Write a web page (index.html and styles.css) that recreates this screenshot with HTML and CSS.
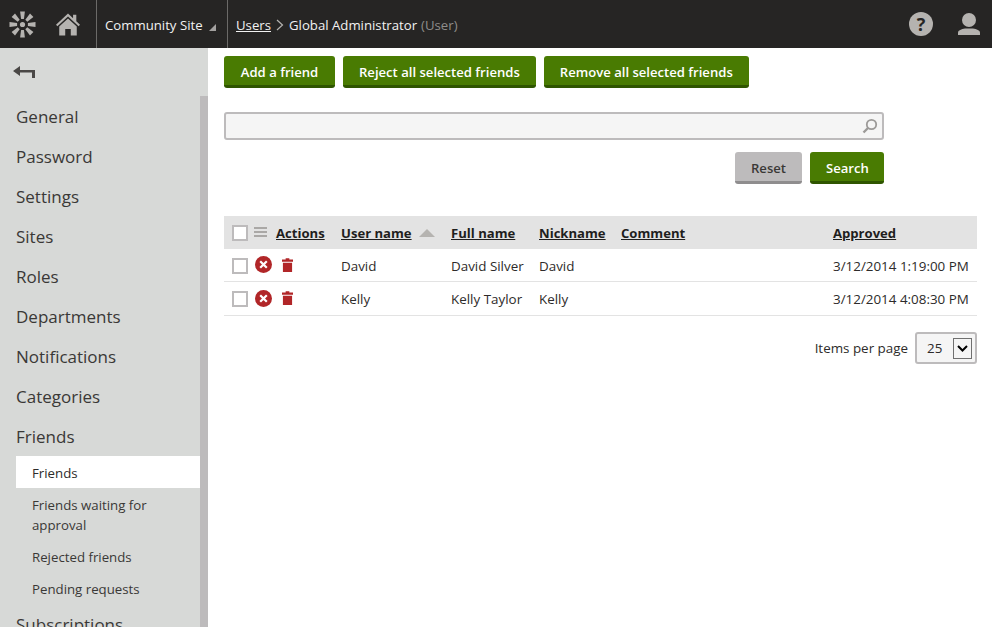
FILE: index.html
```html
<!DOCTYPE html>
<html lang="en">
<head>
  <meta charset="UTF-8" />
  <title>Friends - Global Administrator</title>
  <link rel="stylesheet" href="styles.css">
</head>
<body>
  <header class="topbar">
    <div class="topbar-icons">
      <svg class="logo" width="29" height="29" viewBox="0 0 28 29">
        <g fill="#b5b3b0">
          <circle cx="14" cy="14.5" r="2.6"/>
          <path d="M11.600 1.500h4.800l-1 7.600h-2.800z"/>
          <path d="M11.600 1.500h4.800l-1 7.600h-2.800z" transform="rotate(45 14 14.5)"/>
          <path d="M11.600 1.500h4.800l-1 7.600h-2.800z" transform="rotate(90 14 14.5)"/>
          <path d="M11.600 1.500h4.800l-1 7.600h-2.800z" transform="rotate(135 14 14.5)"/>
          <path d="M11.600 1.500h4.800l-1 7.600h-2.800z" transform="rotate(180 14 14.5)"/>
          <path d="M11.600 1.500h4.800l-1 7.600h-2.800z" transform="rotate(225 14 14.5)"/>
          <path d="M11.600 1.500h4.800l-1 7.600h-2.800z" transform="rotate(270 14 14.5)"/>
          <path d="M11.600 1.500h4.800l-1 7.600h-2.800z" transform="rotate(315 14 14.5)"/>
        </g>
      </svg>
      <svg class="home" width="24" height="23" viewBox="0 0 26 24">
        <path fill="#b5b3b0" d="M13 0 0 12.400l1.500 1.600L13 3.200 24.500 14l1.500-1.600-4-3.800V1.500h-3.500v3.800z"/>
        <path fill="#b5b3b0" d="M13 5.400 3.500 14.300V24H10v-7h6v7h6.500v-9.700z"/>
      </svg>
    </div>
    <div class="site-picker">Community Site <span class="caret"></span></div>
    <nav class="crumbs">
      <a href="#">Users</a>
      <svg class="crumb-sep" width="8" height="12" viewBox="0 0 8 12"><path d="M1 1l5.500 5L1 11" fill="none" stroke="#b5b3b0" stroke-width="1.200"/></svg>
      <span>Global Administrator</span>
      <span class="muted">(User)</span>
    </nav>
    <div class="topbar-right">
      <svg width="24" height="24" viewBox="0 0 24 24">
        <circle cx="12" cy="12" r="12" fill="#b5b3b0"/>
        <text x="12" y="18.500" text-anchor="middle" class="help-mark">?</text>
      </svg>
      <svg width="22" height="22" viewBox="0 0 22 22">
        <circle cx="11" cy="7" r="7" fill="#b5b3b0"/>
        <path fill="#b5b3b0" d="M0 22v-2.500c0-2 3.500-3.500 7-4h8c3.500.5 7 2 7 4V22z"/>
      </svg>
    </div>
  </header>

  <div class="layout">
    <aside class="sidebar">
      <div class="sidebar-scroll">
        <div class="back">
          <svg width="22" height="13" viewBox="0 0 22 13">
            <path fill="#4a4846" d="M7 0 0 5 7 10V6.500h12V12h3V4H7z"/>
          </svg>
        </div>
        <ul class="menu">
          <li>General</li>
          <li>Password</li>
          <li>Settings</li>
          <li>Sites</li>
          <li>Roles</li>
          <li>Departments</li>
          <li>Notifications</li>
          <li>Categories</li>
          <li>Friends</li>
        </ul>
        <ul class="submenu">
          <li class="active">Friends</li>
          <li>Friends waiting for approval</li>
          <li>Rejected friends</li>
          <li>Pending requests</li>
        </ul>
        <ul class="menu">
          <li>Subscriptions</li>
        </ul>
      </div>
      <div class="scrollbar"></div>
    </aside>

    <main class="content">
      <div class="actions">
        <button class="btn btn-add">Add a friend</button>
        <button class="btn">Reject all selected friends</button>
        <button class="btn">Remove all selected friends</button>
      </div>

      <div class="filter">
        <div class="search-box">
          <svg width="16" height="16" viewBox="0 0 16 16">
            <circle cx="9.500" cy="6.500" r="4.700" fill="none" stroke="#9c9a98" stroke-width="1.800"/>
            <path d="M6 10 1.500 14.500" stroke="#9c9a98" stroke-width="2.400"/>
          </svg>
        </div>
        <div class="filter-buttons">
          <button class="btn btn-grey">Reset</button>
          <button class="btn btn-search">Search</button>
        </div>
      </div>

      <table class="grid">
        <colgroup>
          <col class="col-actions"><col class="col-user"><col class="col-full">
          <col class="col-nick"><col class="col-comment"><col class="col-approved">
        </colgroup>
        <thead>
          <tr>
            <th>
              <div class="cell-tools">
                <span class="check"></span>
                <svg class="lines" width="13" height="10" viewBox="0 0 13 10"><path d="M0 1h13M0 5h13M0 9h13" stroke="#aaa8a6" stroke-width="2"/></svg>
                <a href="#">Actions</a>
              </div>
            </th>
            <th><a href="#">User name</a><span class="sort"></span></th>
            <th><a href="#">Full name</a></th>
            <th><a href="#">Nickname</a></th>
            <th><a href="#">Comment</a></th>
            <th><a href="#">Approved</a></th>
          </tr>
        </thead>
        <tbody>
          <tr>
            <td>
              <div class="cell-tools">
                <span class="check"></span>
                <svg class="reject" width="17" height="17" viewBox="0 0 17 17"><circle cx="8.500" cy="8.500" r="8.500" fill="#b12628"/><path d="M5.200 5.200l6.600 6.600M11.800 5.200l-6.600 6.600" stroke="#fff" stroke-width="2.200"/></svg>
                <svg class="trash" width="11" height="14" viewBox="0 0 12 15"><path fill="#b12628" d="M4 0h4v1.500h4V4H0V1.500h4zM1 5h10v10H1z"/></svg>
              </div>
            </td>
            <td>David</td>
            <td>David Silver</td>
            <td>David</td>
            <td></td>
            <td>3/12/2014 1:19:00 PM</td>
          </tr>
          <tr>
            <td>
              <div class="cell-tools">
                <span class="check"></span>
                <svg class="reject" width="17" height="17" viewBox="0 0 17 17"><circle cx="8.500" cy="8.500" r="8.500" fill="#b12628"/><path d="M5.200 5.200l6.600 6.600M11.800 5.200l-6.600 6.600" stroke="#fff" stroke-width="2.200"/></svg>
                <svg class="trash" width="11" height="14" viewBox="0 0 12 15"><path fill="#b12628" d="M4 0h4v1.500h4V4H0V1.500h4zM1 5h10v10H1z"/></svg>
              </div>
            </td>
            <td>Kelly</td>
            <td>Kelly Taylor</td>
            <td>Kelly</td>
            <td></td>
            <td>3/12/2014 4:08:30 PM</td>
          </tr>
        </tbody>
      </table>

      <div class="pager">
        <span>Items per page</span>
        <div class="page-size">
          <span>25</span>
          <span class="arrow-box">
            <svg width="11" height="7" viewBox="0 0 11 7"><path d="M1 1l4.500 4.500L10 1" fill="none" stroke="#000" stroke-width="2"/></svg>
          </span>
        </div>
      </div>
    </main>
  </div>
</body>
</html>
```

FILE: styles.css
```css
html, body {
  margin: 0;
  padding: 0;
  width: 100%;
  height: 100%;
  overflow: hidden;
  background: #fff;
  color: #2d2b2a;
  font-family: "Open Sans", "Noto Sans", sans-serif;
  font-size: 13.4px;
}
a {
  color: inherit;
}
ul {
  list-style: none;
  margin: 0;
  padding: 0;
}

/* top bar */
.topbar {
  height: 48px;
  display: flex;
  align-items: stretch;
  background: #262524;
  color: #f2f2f2;
  font-size: 13.2px;
}
.topbar-icons {
  width: 96px;
  display: flex;
  align-items: center;
  gap: 19px;
  padding-left: 8px;
  box-sizing: border-box;
}
.site-picker {
  width: 132px;
  box-sizing: border-box;
  padding: 2px 0 0 8px;
  border-left: 1px solid #6b6a68;
  border-right: 1px solid #6b6a68;
  display: flex;
  align-items: center;
  gap: 6px;
  white-space: nowrap;
}
.caret {
  width: 0;
  height: 0;
  margin-top: 5px;
  border-left: 7px solid transparent;
  border-bottom: 7px solid #a3a19f;
}
.crumbs {
  display: flex;
  align-items: center;
  gap: 5px;
  padding: 2px 0 0 8px;
  white-space: nowrap;
}
.crumb-sep {
  margin: 0;
}
.muted {
  margin-left: -1px;
  color: #8f8d8b;
}
.topbar-right {
  margin-left: auto;
  display: flex;
  align-items: center;
  gap: 25px;
  padding-right: 12px;
}
.help-mark {
  fill: #262524;
  font-family: "Open Sans", sans-serif;
  font-size: 18px;
  font-weight: 700;
}

/* left menu */
.layout {
  display: flex;
  height: 579px;
}
.sidebar {
  width: 208px;
  flex: none;
  display: flex;
  background: #d7d9d7;
  overflow: hidden;
}
.sidebar-scroll {
  width: 200px;
  flex: none;
}
.scrollbar {
  width: 8px;
  margin-top: 48px;
  background: #bdbbbc;
}
.back {
  height: 48px;
  padding: 17px 0 0 13px;
  box-sizing: border-box;
}
.menu li {
  height: 40px;
  line-height: 41px;
  padding-left: 16px;
  font-size: 17px;
  color: #3a3836;
}
.submenu {
  margin-left: 16px;
}
.submenu li {
  padding: 7px 32px 5px 16px;
  line-height: 20px;
  font-size: 13.250px;
  color: #3a3836;
}
.submenu .active {
  background: #fff;
  color: #2d2b2a;
}

/* main area */
.content {
  flex: 1;
  min-width: 0;
  padding: 8px 15px 0 16px;
}
.actions {
  display: flex;
  gap: 8px;
}
.btn {
  height: 32px;
  padding: 3px 16px 0;
  border: 0;
  border-bottom: 3px solid #2f5500;
  border-radius: 3px;
  background: #497b02;
  color: #fff;
  font-family: inherit;
  font-size: 13.100px;
  font-weight: 600;
  white-space: nowrap;
}
.btn-add {
  width: 111px;
}
.btn-search {
  width: 74px;
}
.btn-grey {
  width: 67px;
  background: #bdbbbc;
  border-bottom-color: #8f8d8e;
  color: #3a3836;
}
.filter {
  width: 660px;
  margin-top: 24px;
}
.search-box {
  height: 28px;
  box-sizing: border-box;
  border: 2px solid #bdbbbc;
  border-radius: 3px;
  background: #f5f5f5;
  display: flex;
  align-items: center;
  justify-content: flex-end;
  padding-right: 4px;
}
.filter-buttons {
  display: flex;
  justify-content: flex-end;
  gap: 8px;
  margin-top: 12px;
}

/* grid */
.grid {
  width: 753px;
  margin-top: 32px;
  border-collapse: separate;
  border-spacing: 0;
  table-layout: fixed;
}
.col-actions { width: 117px; }
.col-user { width: 110px; }
.col-full { width: 88px; }
.col-nick { width: 82px; }
.col-comment { width: 212px; }
.col-approved { width: 144px; }
.grid th {
  height: 33px;
  padding: 0;
  background: #e3e3e3;
  text-align: left;
  font-size: 13.100px;
  font-weight: 700;
  color: #1f1e1d;
}
.grid td {
  height: 32px;
  padding: 1px 0 0;
  box-sizing: border-box;
  border-bottom: 1px solid #e3e3e3;
  white-space: nowrap;
}
.grid tbody tr:first-child td {
  height: 33px;
}
.grid tbody tr:last-child td {
  height: 34px;
}
.cell-tools {
  display: flex;
  align-items: center;
  padding-left: 8px;
}
.check {
  width: 16px;
  height: 16px;
  box-sizing: border-box;
  border: 2px solid #bdbbbc;
  background: #fff;
  flex: none;
}
.lines {
  margin-left: 6px;
  margin-top: -2px;
}
.cell-tools a {
  margin-left: 9px;
}
.reject {
  margin-left: 7px;
  margin-top: -2px;
}
.trash {
  margin-left: 10px;
  margin-top: -2px;
}
.sort {
  display: inline-block;
  width: 0;
  height: 0;
  margin-left: 7px;
  vertical-align: 1px;
  border-left: 8px solid transparent;
  border-right: 8px solid transparent;
  border-bottom: 8px solid #b5b3b0;
}

/* paging */
.pager {
  width: 753px;
  margin-top: 16px;
  display: flex;
  justify-content: flex-end;
  align-items: center;
  gap: 7px;
}
.page-size {
  width: 62px;
  height: 32px;
  box-sizing: border-box;
  border: 2px solid #bdbbbc;
  border-radius: 3px;
  background: #f5f5f5;
  display: flex;
  align-items: center;
  justify-content: space-between;
  padding: 0 3px 0 10px;
}
.arrow-box {
  width: 19px;
  height: 21px;
  box-sizing: border-box;
  border: 1px solid #707070;
  display: flex;
  align-items: center;
  justify-content: center;
}
```
